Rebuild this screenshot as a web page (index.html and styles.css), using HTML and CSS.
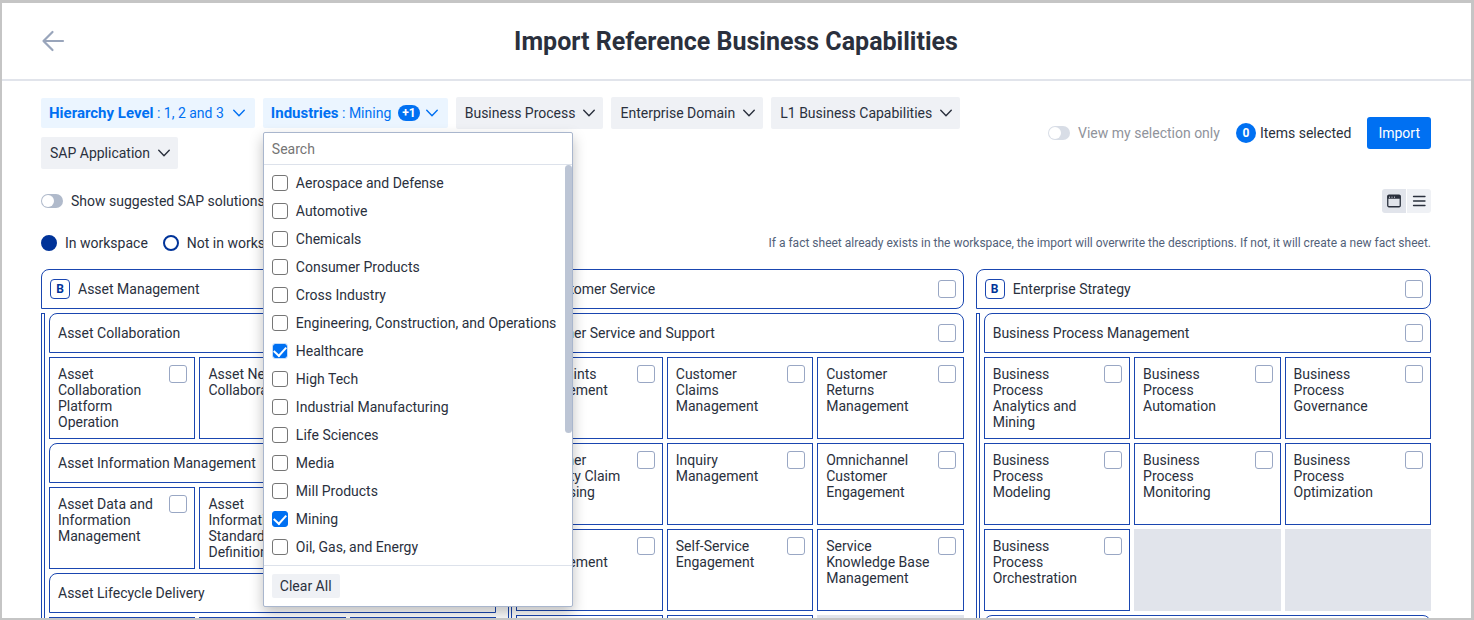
FILE: index.html
```html
<!DOCTYPE html>
<html lang="en">
<head>
<meta charset="utf-8">
<title>Import Reference Business Capabilities</title>
<link rel="stylesheet" href="styles.css">
</head>
<body>
<svg class="defs" aria-hidden="true">
  <symbol id="chevron" viewBox="0 0 12 8"><path d="M.75 1.200 6 6.700 11.250 1.200" fill="none" stroke="currentColor" stroke-width="1.400" stroke-linecap="round" stroke-linejoin="round"/></symbol>
</svg>
<div class="page">
  <header class="header">
    <button class="back" type="button" aria-label="Back"><svg width="24" height="22" viewBox="0 0 24 22"><path d="M22 11H2.500M11.500 2 2.500 11l9 9" fill="none" stroke="currentColor" stroke-width="2.200" stroke-linecap="round" stroke-linejoin="round"/></svg></button>
    <h1 class="title">Import Reference Business Capabilities</h1>
  </header>
  <main class="main">
    <div class="toolbar">
      <div class="filters">
        <button class="chip chip-active" type="button"><span><b>Hierarchy Level</b> : 1, 2 and 3</span><svg class="chevron"><use href="#chevron"/></svg></button>
        <div class="filter">
          <button class="chip chip-active" type="button" aria-expanded="true"><span><b>Industries</b> : Mining</span><span class="more">+1</span><svg class="chevron"><use href="#chevron"/></svg></button>
          <div class="dropdown">
            <input class="search" type="text" placeholder="Search" aria-label="Search industries">
            <div class="options">
              <label class="option"><input class="check" type="checkbox">Aerospace and Defense</label>
              <label class="option"><input class="check" type="checkbox">Automotive</label>
              <label class="option"><input class="check" type="checkbox">Chemicals</label>
              <label class="option"><input class="check" type="checkbox">Consumer Products</label>
              <label class="option"><input class="check" type="checkbox">Cross Industry</label>
              <label class="option"><input class="check" type="checkbox">Engineering, Construction, and Operations</label>
              <label class="option"><input class="check check-recent" type="checkbox" checked>Healthcare</label>
              <label class="option"><input class="check" type="checkbox">High Tech</label>
              <label class="option"><input class="check" type="checkbox">Industrial Manufacturing</label>
              <label class="option"><input class="check" type="checkbox">Life Sciences</label>
              <label class="option"><input class="check" type="checkbox">Media</label>
              <label class="option"><input class="check" type="checkbox">Mill Products</label>
              <label class="option"><input class="check" type="checkbox" checked>Mining</label>
              <label class="option"><input class="check" type="checkbox">Oil, Gas, and Energy</label>
              <div class="thumb"></div>
            </div>
            <div class="dropdown-footer"><button class="clear" type="button">Clear All</button></div>
          </div>
        </div>
        <button class="chip" type="button">Business Process<svg class="chevron"><use href="#chevron"/></svg></button>
        <button class="chip" type="button">Enterprise Domain<svg class="chevron"><use href="#chevron"/></svg></button>
        <button class="chip" type="button">L1 Business Capabilities<svg class="chevron"><use href="#chevron"/></svg></button>
        <button class="chip" type="button">SAP Application<svg class="chevron"><use href="#chevron"/></svg></button>
      </div>
      <div class="actions">
        <label class="switch switch-off"><input class="toggle" type="checkbox" disabled>View my selection only</label>
        <span class="selected"><span class="count">0</span>Items selected</span>
        <button class="import" type="button">Import</button>
      </div>
    </div>
    <div class="options-bar">
      <label class="switch"><input class="toggle" type="checkbox">Show suggested SAP solutions</label>
      <div class="views">
        <button class="view view-on" type="button" aria-label="Board view"><svg width="16" height="16" viewBox="0 0 16 16"><rect x="1.750" y="2.250" width="12.500" height="11.500" rx="1.200" fill="none" stroke="currentColor" stroke-width="1.300"/><path d="M1.500 2.500h13v3.300h-13z" fill="currentColor"/><path d="M3 4.200h1M5.500 4.200h1M8 4.200h1" stroke="#e1e4eb" stroke-width="1"/></svg></button>
        <button class="view" type="button" aria-label="List view"><svg width="16" height="16" viewBox="0 0 16 16"><path d="M2.500 3.500h11.500M2.500 8h11.500M2.500 12.500h11.500" stroke="currentColor" stroke-width="1.300" stroke-linecap="round"/></svg></button>
      </div>
    </div>
    <div class="legend-bar">
      <div class="legend">
        <span class="legend-item"><i class="dot dot-full"></i>In workspace</span>
        <span class="legend-item"><i class="dot"></i>Not in workspace</span>
      </div>
      <p class="note">If a fact sheet already exists in the workspace, the import will overwrite the descriptions. If not, it will create a new fact sheet.</p>
    </div>
    <div class="board">
      <section class="column">
        <label class="level1"><span class="badge">B</span><span class="name">Asset Management</span><input class="pick" type="checkbox"></label>
        <div class="body">
          <div class="rail"></div>
          <div class="cells">
            <label class="level2"><span class="name">Asset Collaboration</span><input class="pick" type="checkbox"></label>
            <label class="cell"><span class="name">Asset Collaboration Platform Operation</span><input class="pick" type="checkbox"></label>
            <label class="cell"><span class="name">Asset Network Collaboration</span><input class="pick" type="checkbox"></label>
            <div class="filler"></div>
            <label class="level2"><span class="name">Asset Information Management</span><input class="pick" type="checkbox"></label>
            <label class="cell"><span class="name">Asset Data and Information Management</span><input class="pick" type="checkbox"></label>
            <label class="cell"><span class="name">Asset Information Standards Definition</span><input class="pick" type="checkbox"></label>
            <div class="filler"></div>
            <label class="level2"><span class="name">Asset Lifecycle Delivery</span><input class="pick" type="checkbox"></label>
            <div class="cell"></div>
            <div class="cell"></div>
            <div class="cell"></div>
          </div>
        </div>
      </section>
      <section class="column">
        <label class="level1"><span class="badge">B</span><span class="name">Customer Service</span><input class="pick" type="checkbox"></label>
        <div class="body">
          <div class="rail"></div>
          <div class="cells">
            <label class="level2"><span class="name">Customer Service and Support</span><input class="pick" type="checkbox"></label>
            <label class="cell"><span class="name">Complaints Management</span><input class="pick" type="checkbox"></label>
            <label class="cell"><span class="name">Customer Claims Management</span><input class="pick" type="checkbox"></label>
            <label class="cell"><span class="name">Customer Returns Management</span><input class="pick" type="checkbox"></label>
            <label class="cell"><span class="name">Customer Warranty Claim Processing</span><input class="pick" type="checkbox"></label>
            <label class="cell"><span class="name">Inquiry Management</span><input class="pick" type="checkbox"></label>
            <label class="cell"><span class="name">Omnichannel Customer Engagement</span><input class="pick" type="checkbox"></label>
            <label class="cell"><span class="name">Return Management</span><input class="pick" type="checkbox"></label>
            <label class="cell"><span class="name">Self-Service Engagement</span><input class="pick" type="checkbox"></label>
            <label class="cell"><span class="name">Service Knowledge Base Management</span><input class="pick" type="checkbox"></label>
            <div class="cell"></div>
            <div class="cell"></div>
            <div class="filler"></div>
          </div>
        </div>
      </section>
      <section class="column">
        <label class="level1"><span class="badge">B</span><span class="name">Enterprise Strategy</span><input class="pick" type="checkbox"></label>
        <div class="body">
          <div class="rail"></div>
          <div class="cells">
            <label class="level2"><span class="name">Business Process Management</span><input class="pick" type="checkbox"></label>
            <label class="cell"><span class="name">Business<br>Process Analytics and Mining</span><input class="pick" type="checkbox"></label>
            <label class="cell"><span class="name">Business<br>Process Automation</span><input class="pick" type="checkbox"></label>
            <label class="cell"><span class="name">Business<br>Process Governance</span><input class="pick" type="checkbox"></label>
            <label class="cell"><span class="name">Business<br>Process Modeling</span><input class="pick" type="checkbox"></label>
            <label class="cell"><span class="name">Business<br>Process Monitoring</span><input class="pick" type="checkbox"></label>
            <label class="cell"><span class="name">Business<br>Process Optimization</span><input class="pick" type="checkbox"></label>
            <label class="cell"><span class="name">Business<br>Process Orchestration</span><input class="pick" type="checkbox"></label>
            <div class="filler"></div>
            <div class="filler"></div>
            <div class="level2"></div>
          </div>
        </div>
      </section>
    </div>
  </main>
</div>
</body>
</html>
```
FILE: styles.css
```css
* { box-sizing: border-box; }

body {
  margin: 0;
  font: 14px/16px Roboto, "Noto Sans", sans-serif;
  color: #2a303d;
  background: #fff;
}

button, input { font: inherit; color: inherit; margin: 0; }
button { border: 0; padding: 0; background: none; }
svg { display: block; flex: none; }
.defs { position: absolute; width: 0; height: 0; }

.page {
  height: 100vh;
  overflow: hidden;
  border: 2px solid #c5c5c5;
  border-width: 3px 3px 2px 2px;
}

.header {
  display: grid;
  grid-template-columns: 24px 1fr 24px;
  align-items: center;
  height: 78px;
  padding: 0 40px 0 39px;
  border-bottom: 2px solid #e1e4eb;
}
.back { color: #99a5bb; }
.title {
  margin: 0;
  padding-top: 2px;
  font-size: 25px;
  line-height: 32px;
  font-weight: 700;
  text-align: center;
}

.main { padding: 16px 40px 0 39px; }

.toolbar {
  display: flex;
  align-items: center;
  justify-content: space-between;
  gap: 24px;
}
.filters {
  display: flex;
  flex-wrap: wrap;
  align-items: center;
  gap: 8px;
  flex: 0 1 960px;
}
.filter { position: relative; }
.chip {
  display: flex;
  align-items: center;
  gap: 8px;
  height: 32px;
  padding: 0 8px 0 9px;
  border-radius: 2px;
  background: #eff1f5;
}
.chip-active {
  height: 30px;
  padding: 0 10px 0 8px;
  gap: 9px;
  background: #ebf5ff;
  color: #0070f2;
}
.chip b { font-size: 15px; }
.chevron { width: 12px; height: 8px; }
.more {
  padding: 0 4px;
  margin: 0 -3px 0 -2px;
  border-radius: 8px;
  background: #0070f2;
  color: #fff;
  font-size: 12px;
  font-weight: 700;
}

.dropdown {
  position: absolute;
  top: 34px;
  left: 0;
  z-index: 2;
  width: 310px;
  border: 1px solid #a9b6cd;
  border-radius: 2px;
  background: #fff;
  box-shadow: 0 6px 14px rgba(0, 0, 0, 0.25);
}
.search {
  display: block;
  width: 100%;
  height: 32px;
  padding: 0 8px;
  border: 0;
  border-bottom: 1px solid #dde2eb;
  background: none;
}
.search::placeholder { color: #757575; opacity: 1; }
.options {
  position: relative;
  height: 400px;
  padding: 4px 0;
  overflow: hidden;
}
.option {
  display: flex;
  align-items: center;
  gap: 8px;
  height: 28px;
  padding: 0 8px;
}
.check, .pick, .toggle { appearance: none; flex: none; }
.check {
  width: 16px;
  height: 16px;
  border: 1px solid #767676;
  border-radius: 3px;
}
.check:checked {
  border-color: #0070f2;
  background: #0070f2;
  display: grid;
  place-items: center;
}
.check:checked::before {
  content: "";
  width: 6px;
  height: 10px;
  margin-bottom: 3px;
  border: solid #fff;
  border-width: 0 2px 2px 0;
  transform: rotate(42deg);
}
.check-recent:checked {
  border-color: #c4ddfb;
  background-clip: padding-box;
}
.thumb {
  position: absolute;
  top: 0;
  right: 0;
  width: 7px;
  height: 268px;
  border-radius: 4px;
  background: #bcc5d5;
}
.dropdown-footer {
  padding: 8px;
  border-top: 1px solid #dde2eb;
}
.clear {
  display: block;
  height: 24px;
  padding: 0 8px;
  border-radius: 2px;
  background: #eff1f5;
}

.actions { display: flex; align-items: center; gap: 16px; white-space: nowrap; }
.switch { display: flex; align-items: center; gap: 8px; }
.switch-off { color: #8f939b; }
.toggle {
  width: 22px;
  height: 14px;
  padding: 1px;
  border-radius: 7px;
  background: #b0bacb;
}
.toggle::before {
  content: "";
  display: block;
  width: 12px;
  height: 12px;
  border-radius: 50%;
  background: #fff;
}
.switch-off .toggle { background: #d8dde6; }
.selected { display: flex; align-items: center; gap: 4px; }
.count {
  width: 20px;
  border-radius: 50%;
  background: #0070f2;
  color: #fff;
  font-size: 12px;
  line-height: 20px;
  font-weight: 700;
  text-align: center;
}
.import {
  height: 32px;
  padding: 0 11px;
  border-radius: 3px;
  background: #0070f2;
  color: #fff;
}

.options-bar {
  display: flex;
  align-items: center;
  justify-content: space-between;
  margin-top: 20px;
}
.views {
  display: flex;
  gap: 1px;
  border-radius: 3px;
  overflow: hidden;
}
.view { padding: 4px; background: #eff1f5; }
.view-on { background: #e1e4eb; }

.legend-bar {
  display: flex;
  align-items: center;
  justify-content: space-between;
  margin-top: 22px;
}
.legend { display: flex; gap: 15px; }
.legend-item { display: flex; align-items: center; gap: 8px; }
.dot {
  width: 16px;
  height: 16px;
  border: 2px solid #003399;
  border-radius: 50%;
}
.dot-full { background: #003399; }
.note { margin: 0; font-size: 12px; color: #526179; }

.board {
  display: grid;
  grid-template-columns: repeat(3, 1fr);
  gap: 12px;
  margin-top: 18px;
}
.column { display: grid; gap: 4px; align-content: start; }
.level1, .level2, .cell { display: flex; border: 1px solid #1a46b0; }
.level1, .level2 {
  align-items: center;
  gap: 8px;
  height: 40px;
  padding: 0 7px;
}
.level1 { border-radius: 8px 8px 8px 0; }
.level2 { grid-column: 1 / -1; padding-left: 8px; border-radius: 8px 8px 0 0; }
.name { flex: 1; min-width: 0; }
.badge {
  width: 20px;
  margin-left: 1px;
  border: 1px solid #1a46b0;
  border-radius: 4px;
  color: #003399;
  font-size: 12px;
  line-height: 18px;
  font-weight: 700;
  text-align: center;
}
.pick {
  width: 18px;
  height: 18px;
  border: 1px solid #99a7c4;
  border-radius: 3px;
  background: #fff;
}
.body { display: grid; grid-template-columns: 4px 1fr; gap: 4px; }
.rail { border: 1px solid #1a46b0; border-bottom: 0; }
.cells {
  display: grid;
  grid-template-columns: repeat(3, 1fr);
  grid-auto-rows: minmax(40px, auto);
  gap: 4px;
}
.cell { height: 82px; padding: 7px 7px 0 8px; gap: 6px; }
.cell .name { padding-top: 1px; }
.filler { height: 82px; background: #e1e4eb; }
```
